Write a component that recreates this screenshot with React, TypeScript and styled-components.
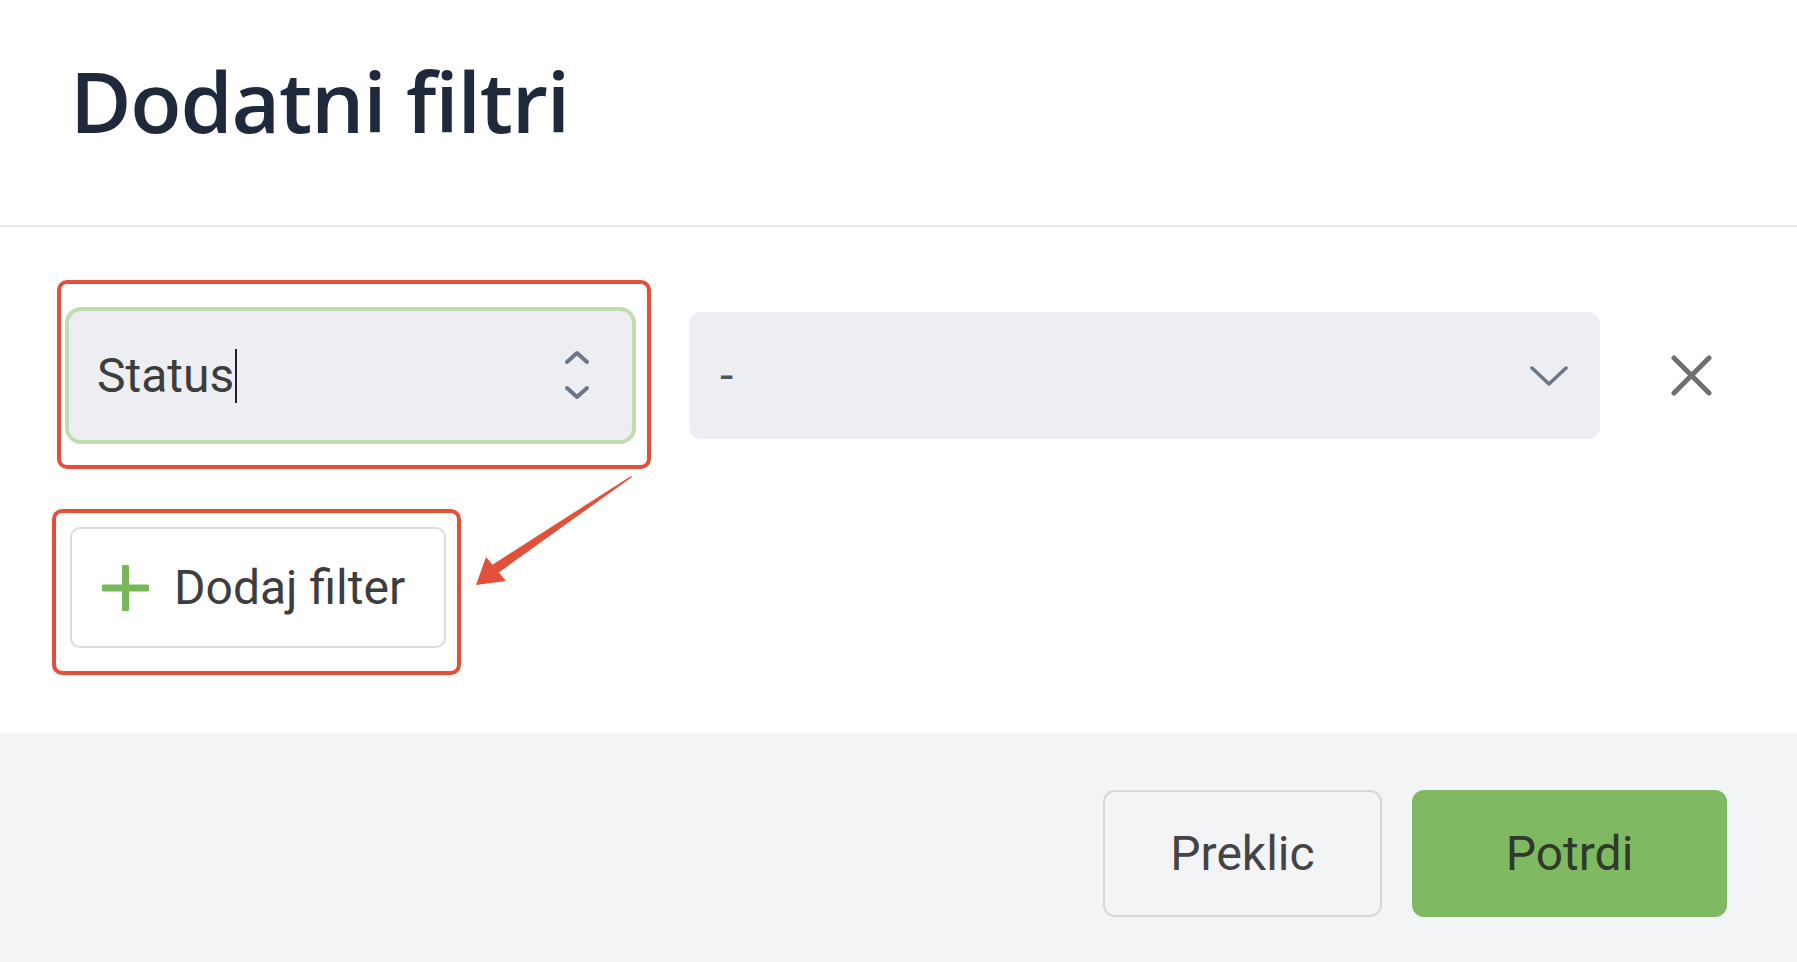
import styled, { createGlobalStyle } from "styled-components";

const colors = {
  title: "#1e293b",
  text: "#3d3d3d",
  field: "#eceef1",
  focus: "#c0ddb2",
  line: "#e6e7ea",
  footer: "#f3f4f6",
  green: "#7fba62",
  plus: "#78b858",
  mark: "#e3503a",
  icon: "#6b7689",
};

const GlobalStyle = createGlobalStyle`
  html, body, #root {
    margin: 0;
    height: 100%;
  }
  body {
    background: #fff;
    font-family: Roboto, "Liberation Sans", sans-serif;
  }
  * {
    box-sizing: border-box;
  }
`;

const Modal = styled.div`
  display: flex;
  flex-direction: column;
  min-height: 100vh;
  background: #fff;
`;

const Header = styled.header`
  height: 227px;
  padding: 50px 70px 0;
  border-bottom: 2px solid ${colors.line};
  flex-shrink: 0;
`;

const Title = styled.h1`
  margin: 0;
  font-family: "Open Sans", "Noto Sans", sans-serif;
  font-weight: 600;
  font-size: 84px;
  line-height: 102px;
  color: ${colors.title};
  letter-spacing: -1.2px;
`;

const Body = styled.section`
  display: flex;
  flex-direction: column;
  align-items: flex-start;
  padding: 80px 85px 85px 65px;
`;

const FilterRow = styled.div`
  display: flex;
  align-items: center;
  width: 100%;
`;

const Marked = styled.div`
  position: relative;
  flex-shrink: 0;
`;

const MarkBox = styled.div<{ $top: number; $left: number; $right: number; $bottom: number }>`
  position: absolute;
  top: ${(p) => -p.$top}px;
  left: ${(p) => -p.$left}px;
  right: ${(p) => -p.$right}px;
  bottom: ${(p) => -p.$bottom}px;
  border: 4px solid ${colors.mark};
  border-radius: 10px;
  pointer-events: none;
`;

const ComboInput = styled.div`
  display: flex;
  align-items: center;
  width: 571px;
  height: 137px;
  padding: 0 42px 0 28px;
  background: ${colors.field};
  border: 4px solid ${colors.focus};
  border-radius: 16px;
  font-size: 48px;
  color: ${colors.text};
`;

const InputText = styled.span`
  display: flex;
  align-items: center;
  flex: 1;
`;

const Caret = styled.span`
  display: inline-block;
  width: 2px;
  height: 54px;
  margin-left: 1px;
  background: #222;
`;

const Select = styled.div`
  display: flex;
  align-items: center;
  justify-content: space-between;
  flex: 1;
  height: 127px;
  margin-left: 53px;
  padding: 0 32px 0 31px;
  background: ${colors.field};
  border-radius: 12px;
  font-size: 48px;
  color: #4b5563;
`;

const CloseButton = styled.button`
  display: flex;
  align-items: center;
  justify-content: center;
  width: 41px;
  height: 41px;
  margin-left: 71px;
  padding: 0;
  border: none;
  background: none;
  cursor: pointer;
`;

const AddButton = styled.button`
  display: flex;
  align-items: center;
  gap: 25px;
  width: 376px;
  height: 121px;
  padding: 0 0 0 30px;
  background: #fff;
  border: 2px solid #dcdcdc;
  border-radius: 10px;
  font-family: Roboto, "Liberation Sans", sans-serif;
  font-size: 48px;
  color: ${colors.text};
  cursor: pointer;
`;

const AddWrap = styled(Marked)`
  margin: 83px 0 0 5px;
`;

const Arrow = styled.svg`
  position: absolute;
  left: 404px;
  top: -58px;
  overflow: visible;
`;

const Footer = styled.footer`
  flex: 1;
  display: flex;
  justify-content: flex-end;
  align-items: flex-start;
  gap: 30px;
  padding: 57px 70px 0;
  background: ${colors.footer};
`;

const FooterButton = styled.button<{ $primary?: boolean }>`
  width: ${(p) => (p.$primary ? 315 : 279)}px;
  height: 127px;
  border-radius: 12px;
  border: 2px solid ${(p) => (p.$primary ? colors.green : "#d6d7da")};
  background: ${(p) => (p.$primary ? colors.green : colors.footer)};
  font-family: Roboto, "Liberation Sans", sans-serif;
  font-size: 48px;
  color: ${(p) => (p.$primary ? "#2f3a2a" : "#444")};
  cursor: pointer;
`;

export default function App() {
  return (
    <Modal>
      <GlobalStyle />
      <Header>
        <Title>Dodatni filtri</Title>
      </Header>
      <Body>
        <FilterRow>
          <Marked>
            <ComboInput>
              <InputText>
                Status
                <Caret />
              </InputText>
              <svg width="26" height="52" viewBox="0 0 26 52" fill="none">
                <path
                  d="M3 12 L13 3 L23 12"
                  stroke={colors.icon}
                  strokeWidth="4"
                  strokeLinecap="round"
                  strokeLinejoin="round"
                />
                <path
                  d="M3 38 L13 47 L23 38"
                  stroke={colors.icon}
                  strokeWidth="4"
                  strokeLinecap="round"
                  strokeLinejoin="round"
                />
              </svg>
            </ComboInput>
            <MarkBox $top={27} $left={8} $right={15} $bottom={25} />
          </Marked>
          <Select>
            <span>-</span>
            <svg width="38" height="20" viewBox="0 0 38 20" fill="none">
              <path
                d="M2 2 L19 18 L36 2"
                stroke={colors.icon}
                strokeWidth="3.5"
                strokeLinecap="round"
                strokeLinejoin="round"
              />
            </svg>
          </Select>
          <CloseButton aria-label="Odstrani">
            <svg width="41" height="41" viewBox="0 0 41 41" fill="none">
              <path
                d="M3 3 L38 38 M38 3 L3 38"
                stroke="#707070"
                strokeWidth="5"
                strokeLinecap="round"
              />
            </svg>
          </CloseButton>
        </FilterRow>
        <AddWrap>
          <AddButton>
            <svg width="47" height="46" viewBox="0 0 47 46" fill="none">
              <path
                d="M23.5 2 V44 M2 23 H45"
                stroke={colors.plus}
                strokeWidth="7"
                strokeLinecap="round"
              />
            </svg>
            Dodaj filter
          </AddButton>
          <MarkBox $top={18} $left={18} $right={15} $bottom={27} />
          <Arrow width="160" height="120" viewBox="0 0 160 120">
            <path d="M158 8 L24 104 L18 96 L157 7 Z" fill={colors.mark} />
            <path d="M2 116 L12 88 L32 112 Z" fill={colors.mark} />
          </Arrow>
        </AddWrap>
      </Body>
      <Footer>
        <FooterButton>Preklic</FooterButton>
        <FooterButton $primary>Potrdi</FooterButton>
      </Footer>
    </Modal>
  );
}
